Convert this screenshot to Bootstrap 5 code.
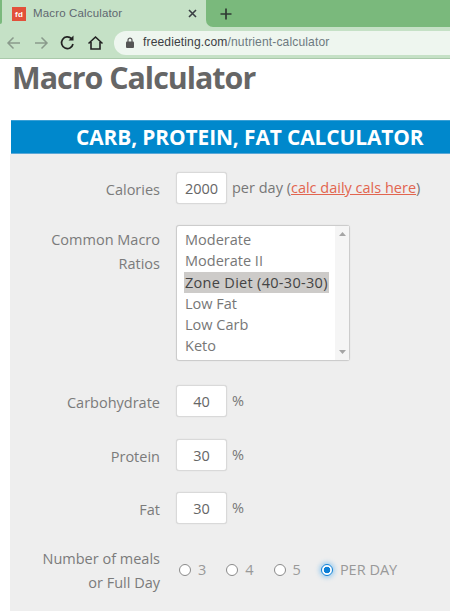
<!doctype html>
<html lang="en"><head><meta charset="utf-8"><title>Macro Calculator</title>
<link href="https://cdn.jsdelivr.net/npm/bootstrap@5.3.0/dist/css/bootstrap.min.css" rel="stylesheet">
<style>
html,body{height:611px;overflow:hidden;background:#fff}
body{font-family:"Open Sans","Noto Sans",sans-serif;color:#777;font-size:14.5px}
.tabstrip{height:27px;background:#c5e1c6}
.sliver{width:2px;height:24px;background:#7ab97c;border-bottom-right-radius:2px;align-self:flex-start;flex:none}
.tabshape{width:204px;height:27px;padding-left:10px;padding-right:9px;color:#5f6770;font-size:11.5px;font-family:"Liberation Sans",sans-serif;letter-spacing:.15px}
.favicon{width:14px;height:14px;background:#e2503a;color:#fff;font-size:8px;font-weight:700;line-height:16px;text-align:center;margin-right:7px}
.tabshape .grow{flex:1}
.greenrest{flex:1;height:27px;background:#7ab97c;border-bottom-left-radius:7px;padding-left:14px}
.toolbar{height:32px;background:#c5e1c6;border-bottom:1px solid #a9c9aa;padding-left:6px}
.navicon{width:27px;height:20px;flex:none}
.urlbar{flex:1;height:24px;background:#eef6ef;border-radius:12px 0 0 12px;padding-left:12px;font-family:"Liberation Sans",sans-serif;font-size:12.1px;color:#6d7a80;letter-spacing:.12px}
.urlbar b{font-weight:400;color:#3c4043}
.urlbar svg{margin-right:9px}
.pagewrap{padding-left:11px}
.title{font-family:"Open Sans",sans-serif;font-weight:700;color:#666;font-size:30.4px;line-height:38px;letter-spacing:-1px;margin:0 0 0 1px;height:61px}
.calchead{background:#0088cc;color:#fff;height:34px;line-height:33px;font-weight:700;font-size:20.9px;margin:0;padding-left:65px;border-top:1px solid #3aa0d6;border-bottom:1px solid #5aa7d6;letter-spacing:-.1px;white-space:nowrap}
.panel{background:#eee;height:460px;margin-left:-1px;padding-top:18px}
.fieldline{display:flex;align-items:center}
.fieldname{width:150px;flex:none;padding-left:30px;padding-top:3px;text-align:right;line-height:24px;color:#7b7b7b}
.boxnum.form-control{width:51px;height:32px;margin-left:16px;border:1px solid #d9d9d9;border-radius:3px;padding:0;text-align:center;font-size:14.5px;color:#666;background:#fff;box-shadow:0 0 1px #ccc}
.after{margin-left:5px;color:#777}
.after a{color:#e2654f}
.selrow{margin-top:21px;align-items:flex-start}
.selbox{margin-left:16px;width:174px;height:136px;background:#fff;border:1px solid #ccc;border-radius:3px;padding:3px 0 0 7px;display:flex;box-shadow:0 0 1px #ccc}
.opts{width:145px;flex:none}
.optline{height:21.3px;line-height:21.3px;padding-left:1px;font-size:14.5px;color:#777;white-space:nowrap}
.optline.picked{background:#cdcbc9;color:#444;letter-spacing:.3px}
.scroller{width:15px;margin-left:6px;margin-top:-3px;height:134px;background:#f5f5f5;display:flex;flex-direction:column;justify-content:space-between;align-items:center;padding:6px 0}
.gapa{margin-top:24px}
.gapb{margin-top:22px}
.gapc{margin-top:21px}
.mealrow{margin-top:20px}
.radios{margin-left:19px;gap:20px;display:flex;align-items:center;color:#999}
.radios label{display:flex;align-items:center;gap:7px;line-height:20px;margin:0}
.radios .form-check-input{width:12px;height:12px;margin:0;border:1px solid #8a8a8a;background-color:#fff;flex:none}
.radios .form-check-input:checked{background-color:#fff;background-image:radial-gradient(circle,#0d7fd6 0 3px,#fff 3.6px);background-size:100% 100%;border-color:#0d7fd6;box-shadow:0 0 4px 2px rgba(60,165,240,.4)}
</style></head><body>
<div class="tabstrip d-flex align-items-center">
 <div class="sliver"></div>
 <div class="tabshape d-flex align-items-center"><span class="favicon">fd</span><span>Macro Calculator</span><span class="grow"></span>
  <svg width="9" height="9" viewBox="0 0 9 9"><path d="M1 1l7 7M8 1L1 8" stroke="#3a3f44" stroke-width="1.6"/></svg></div>
 <div class="greenrest d-flex align-items-center"><svg width="12" height="12" viewBox="0 0 12 12"><path d="M6 .5v11M.5 6h11" stroke="#2f3a33" stroke-width="1.7"/></svg></div>
</div>
<div class="toolbar d-flex align-items-center">
 <svg class="navicon" viewBox="0 0 27 20"><path d="M14 10H2M7.500 4.500 2 10l5.500 5.500" fill="none" stroke="#8a9a8c" stroke-width="1.500"/></svg>
 <svg class="navicon" viewBox="0 0 27 20"><path d="M2 10h12M8.500 4.500 14 10l-5.500 5.500" fill="none" stroke="#8a9a8c" stroke-width="1.500"/></svg>
 <svg class="navicon" viewBox="0 0 27 20"><path d="M11.500 5.700A5.800 5.800 0 1 0 13 11" fill="none" stroke="#222" stroke-width="1.700"/><path d="M8.500 7.500h5v-5z" fill="#222"/></svg>
 <svg class="navicon" viewBox="0 0 27 20"><path d="M1.500 10.500 8.500 4l7 6.500M4 9v7h9V9" fill="none" stroke="#222" stroke-width="1.600"/></svg>
 <div class="urlbar d-flex align-items-center">
  <svg width="8" height="11" viewBox="0 0 8 11"><path d="M2 5V3.200a2 2 0 0 1 4 0V5" fill="none" stroke="#555" stroke-width="1.200"/><rect y="4.500" width="8" height="6.500" rx="1" fill="#555"/></svg>
  <span><b>freedieting.com</b>/nutrient-calculator</span></div>
</div>
<div class="pagewrap">
 <h1 class="title">Macro Calculator</h1>
 <h2 class="calchead">CARB, PROTEIN, FAT CALCULATOR</h2>
 <form class="panel">
  <div class="fieldline"><div class="fieldname">Calories</div><input class="boxnum form-control" value="2000"><span class="after">per day (<a href="#">calc daily cals here</a>)</span></div>
  <div class="fieldline selrow"><div class="fieldname">Common Macro Ratios</div>
   <div class="selbox"><div class="opts">
    <div class="optline">Moderate</div><div class="optline">Moderate II</div><div class="optline picked">Zone Diet (40-30-30)</div><div class="optline">Low Fat</div><div class="optline">Low Carb</div><div class="optline">Keto</div></div>
    <div class="scroller"><svg width="7" height="4" viewBox="0 0 7 4"><path d="M3.500 0 7 4H0z" fill="#a5a5a5"/></svg><svg width="7" height="4" viewBox="0 0 7 4"><path d="M3.500 4 7 0H0z" fill="#a5a5a5"/></svg></div>
   </div></div>
  <div class="fieldline gapa"><div class="fieldname">Carbohydrate</div><input class="boxnum form-control" value="40"><span class="after">%</span></div>
  <div class="fieldline gapb"><div class="fieldname">Protein</div><input class="boxnum form-control" value="30"><span class="after">%</span></div>
  <div class="fieldline gapc"><div class="fieldname">Fat</div><input class="boxnum form-control" value="30"><span class="after">%</span></div>
  <div class="fieldline mealrow"><div class="fieldname">Number of meals or Full Day</div>
   <div class="radios">
    <label><input class="form-check-input" type="radio" name="m">3</label>
    <label><input class="form-check-input" type="radio" name="m">4</label>
    <label><input class="form-check-input" type="radio" name="m">5</label>
    <label><input class="form-check-input" type="radio" name="m" checked>PER DAY</label>
   </div></div>
 </form>
</div>
<script src="https://cdn.jsdelivr.net/npm/bootstrap@5.3.0/dist/js/bootstrap.bundle.min.js"></script>
</body></html>
